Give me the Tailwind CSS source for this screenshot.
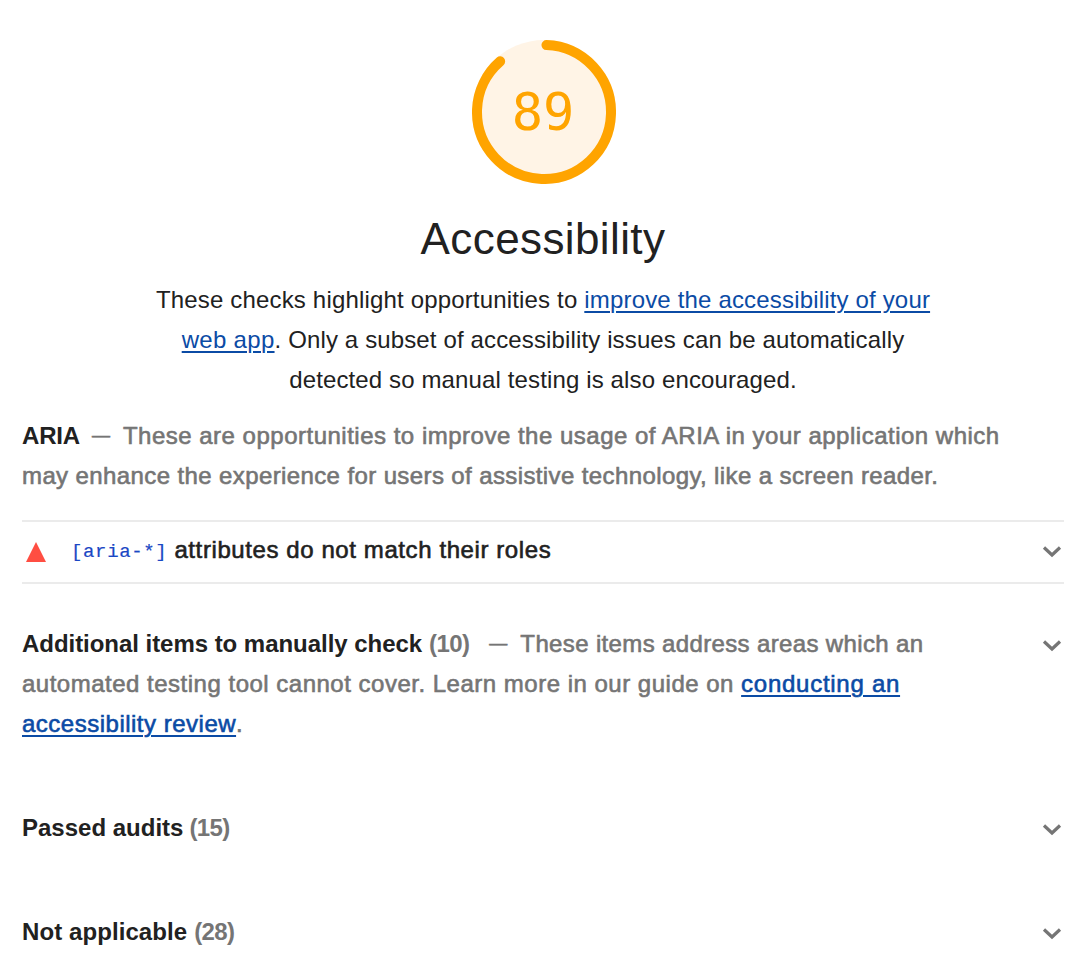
<!DOCTYPE html>
<html lang="en">
<head>
<meta charset="utf-8">
<title>Accessibility</title>
<script src="https://cdn.jsdelivr.net/npm/@tailwindcss/browser@4"></script>
</head>
<body class="bg-white text-[#212121] font-['Liberation_Sans',Arial,sans-serif]">
<main class="h-[970px] w-[1080px] overflow-hidden pt-10 pl-[22px] pr-4 text-[24px] leading-10 whitespace-nowrap">
  <header class="flex flex-col items-center">
    <div class="ml-[2px] grid size-36 place-items-center">
      <svg class="col-start-1 row-start-1 size-36" viewBox="0 0 144 144" fill="none">
        <circle cx="72" cy="72" r="72" fill="#fff4e6"/>
        <circle cx="72" cy="72" r="67" stroke="#ffa400" stroke-width="10" stroke-linecap="round" pathLength="360" stroke-dasharray="317 360" transform="rotate(-87.9 72 72)"/>
      </svg>
      <span class="col-start-1 row-start-1 mr-[2px] text-[52px] leading-none text-[#ffa400] font-['DejaVu_Sans_Mono',monospace]">89</span>
    </div>
    <h1 class="mt-[29px] text-[44px] leading-[52px] tracking-[0.4px]">Accessibility</h1>
    <p class="mt-[15px] text-center"><span class="tracking-[0.17px]">These checks highlight opportunities to <a class="text-[#0b4ba5] underline decoration-2 underline-offset-[3px]">improve the accessibility of your</a></span><br><span class="tracking-[0.135px]"><a class="tracking-[0.3px] text-[#0b4ba5] underline decoration-2 underline-offset-[3px]">web app</a>. Only a subset of accessibility issues can be automatically</span><br><span class="tracking-[0.13px]">detected so manual testing is also encouraged.</span></p>
  </header>
  <p class="mt-4 text-[#757575] [-webkit-text-stroke:0.6px]"><b class="[-webkit-text-stroke:0] tracking-[-0.2px] text-[#212121]">ARIA</b><span class="mr-[13px] ml-[12px] align-[3px] text-[18px] leading-none">—</span><span class="tracking-[0.5px]">These are opportunities to improve the usage of ARIA in your application which</span><br><span class="tracking-[0.39px]">may enhance the experience for users of assistive technology, like a screen reader.</span></p>
  <div class="mt-6 flex h-16 items-center border-y-2 border-[#ebebeb]">
    <svg class="ml-1 size-5" viewBox="0 0 20 20"><path d="M10 0 20 20H0z" fill="#ff4e42"/></svg>
    <span class="ml-[25px] text-[19px] tracking-[0.65px] text-[#1a47c4] font-['Liberation_Mono',monospace] [-webkit-text-stroke:0.2px]">[aria-*]</span>
    <span class="ml-[7px] grow pb-1 tracking-[0.59px] [-webkit-text-stroke:0.6px]">attributes do not match their roles</span>
    <svg class="mr-0.5 h-5 w-5" viewBox="0 0 20 20" fill="none" stroke="#757575" stroke-width="3.2"><path d="M2 5.5l8 7.5 8-7.5"/></svg>
  </div>
  <section class="mt-10 flex justify-between">
    <p class="text-[#757575] [-webkit-text-stroke:0.6px]"><b class="[-webkit-text-stroke:0] tracking-[-0.04px] text-[#212121]">Additional items to manually check</b><b class="ml-[7px] tracking-[-0.6px] [-webkit-text-stroke:0]">(10)</b><span class="mr-[13px] ml-[20px] align-[3px] text-[18px] leading-none">—</span><span class="tracking-[0.36px]">These items address areas which an</span><br><span class="tracking-[0.5px]">automated testing tool cannot cover. Learn more in our guide on </span><a class="tracking-[0.73px] text-[#0b4ba5] underline decoration-2 underline-offset-[3px]">conducting an</a><br><a class="tracking-[0.5px] text-[#0b4ba5] underline decoration-2 underline-offset-[3px]">accessibility review</a>.</p>
    <svg class="mt-3 mr-0.5 h-5 w-5" viewBox="0 0 20 20" fill="none" stroke="#757575" stroke-width="3.2"><path d="M2 5.5l8 7.5 8-7.5"/></svg>
  </section>
  <section class="mt-16 flex justify-between">
    <p><b>Passed audits</b><b class="ml-[6px] tracking-[-0.6px] text-[#757575]">(15)</b></p>
    <svg class="mt-3 mr-0.5 h-5 w-5" viewBox="0 0 20 20" fill="none" stroke="#757575" stroke-width="3.2"><path d="M2 5.5l8 7.5 8-7.5"/></svg>
  </section>
  <section class="mt-16 flex justify-between">
    <p><b class="tracking-[0.08px]">Not applicable</b><b class="ml-[7px] tracking-[-0.6px] text-[#757575]">(28)</b></p>
    <svg class="mt-3 mr-0.5 h-5 w-5" viewBox="0 0 20 20" fill="none" stroke="#757575" stroke-width="3.2"><path d="M2 5.5l8 7.5 8-7.5"/></svg>
  </section>
</main>
</body>
</html>
